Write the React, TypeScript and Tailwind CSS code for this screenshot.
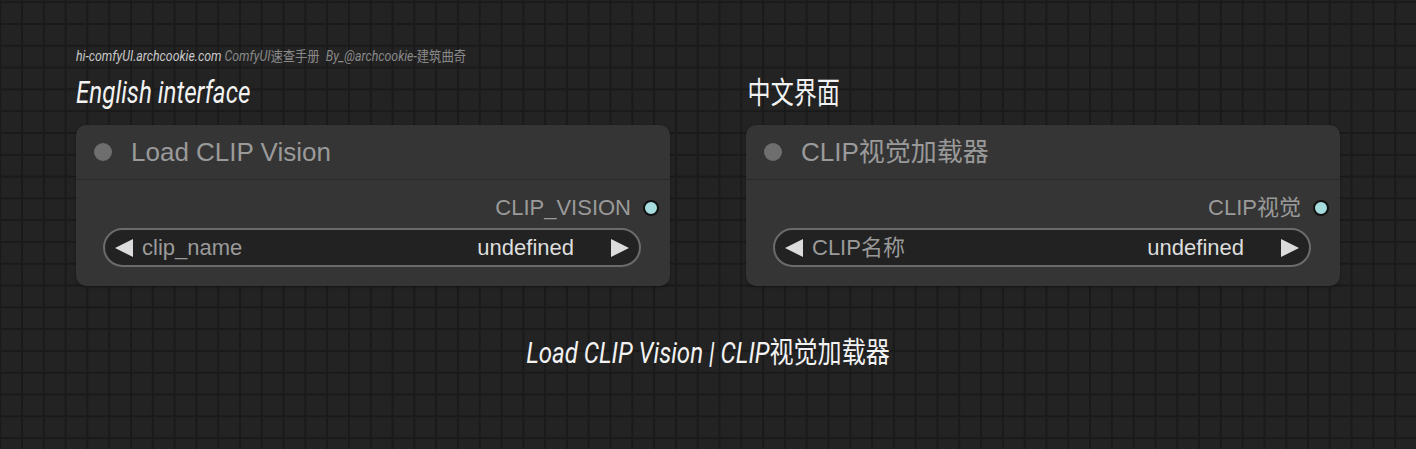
import React from "react";

function LeftTri() {
  return (
    <svg width="18" height="18" viewBox="0 0 18 18" className="shrink-0">
      <polygon points="0,9 18,0 18,18" fill="#dcdcdc" />
    </svg>
  );
}

function RightTri() {
  return (
    <svg width="18" height="18" viewBox="0 0 18 18" className="shrink-0">
      <polygon points="0,0 18,9 0,18" fill="#dcdcdc" />
    </svg>
  );
}

type NodeProps = {
  title: string;
  output: string;
  label: string;
  value: string;
};

function Node({ title, output, label, value }: NodeProps) {
  return (
    <div className="w-[594px] rounded-[10px] bg-[#353535] font-['Liberation_Sans','Noto_Sans_CJK_SC',Arial,sans-serif] shadow-[0_1px_3px_rgba(0,0,0,0.35)]">
      <div className="flex h-[55px] items-center border-b border-[#2a2a2a] pl-[18px]">
        <div className="h-[18px] w-[18px] rounded-full bg-[#6e6e6e]" />
        <div className="ml-[19px] whitespace-nowrap text-[26px] leading-none text-[#9a9a9a]">
          {title}
        </div>
      </div>
      <div className="pb-[19px] pl-[27px] pr-[29px] pt-[15px]">
        <div className="-mr-[18px] flex h-[26px] items-center justify-end gap-[12px]">
          <span className="whitespace-nowrap text-[22px] leading-none text-[#9a9a9a]">
            {output}
          </span>
          <span className="h-[16px] w-[16px] rounded-full border-2 border-[#111] bg-[#a6dcde]" />
        </div>
        <div className="mt-[7px] flex h-[39px] items-center rounded-full border-2 border-[#6b6b6b] bg-[#222222] px-[10px]">
          <LeftTri />
          <span className="ml-[9px] whitespace-nowrap text-[22px] leading-none text-[#9a9a9a]">
            {label}
          </span>
          <div className="flex-1" />
          <span className="whitespace-nowrap text-[22px] leading-none text-[#dddddd]">
            {value}
          </span>
          <span className="ml-[37px] flex">
            <RightTri />
          </span>
        </div>
      </div>
    </div>
  );
}

export default function App() {
  return (
    <div className="h-[449px] w-[1416px] overflow-hidden bg-[#232323] [background-image:linear-gradient(to_right,#1a1a1a_2px,transparent_2px),linear-gradient(to_bottom,#1a1a1a_2px,transparent_2px)] [background-position:-0.8px_1.2px] [background-size:21.8px_21.8px]">
      <div className="pl-[76px] pt-[47px]">
        <div className="h-[18px] origin-left scale-x-[0.88] whitespace-nowrap font-['Roboto','Noto_Sans_CJK_SC',sans-serif] text-[14px] italic leading-[18px]">
          <span className="text-[#c9c9c9]">hi-comfyUI.archcookie.com</span>
          <span className="text-[#8a8a8a]">
            {" "}ComfyUI<span className="not-italic">速查手册</span>{"  "}
            &nbsp;By_@archcookie-<span className="not-italic">建筑曲奇</span>
          </span>
        </div>
        <div className="mt-[10px] grid grid-cols-[594px_594px] gap-x-[76px]">
          <div>
            <div className="h-[36px] origin-left scale-x-[0.78] whitespace-nowrap font-['Roboto',sans-serif] text-[31px] italic leading-[36px] text-[#f2f2f2]">
              English interface
            </div>
            <div className="mt-[14px]">
              <Node
                title="Load CLIP Vision"
                output="CLIP_VISION"
                label="clip_name"
                value="undefined"
              />
            </div>
          </div>
          <div>
            <div className="h-[36px] origin-left scale-x-[0.77] whitespace-nowrap pl-[2px] font-['Noto_Sans_CJK_SC',sans-serif] text-[30px] font-normal leading-[30px] text-[#f2f2f2]">
              中文界面
            </div>
            <div className="mt-[14px]">
              <Node
                title="CLIP视觉加载器"
                output="CLIP视觉"
                label="CLIP名称"
                value="undefined"
              />
            </div>
          </div>
        </div>
      </div>
      <div className="mt-[50px] h-[34px] origin-center scale-x-[0.83] whitespace-nowrap text-center font-['Roboto','Noto_Sans_CJK_SC',sans-serif] text-[29px] italic leading-[34px] text-[#f2f2f2]">
        Load CLIP Vision | CLIP<span className="not-italic">视觉加载器</span>
      </div>
    </div>
  );
}
